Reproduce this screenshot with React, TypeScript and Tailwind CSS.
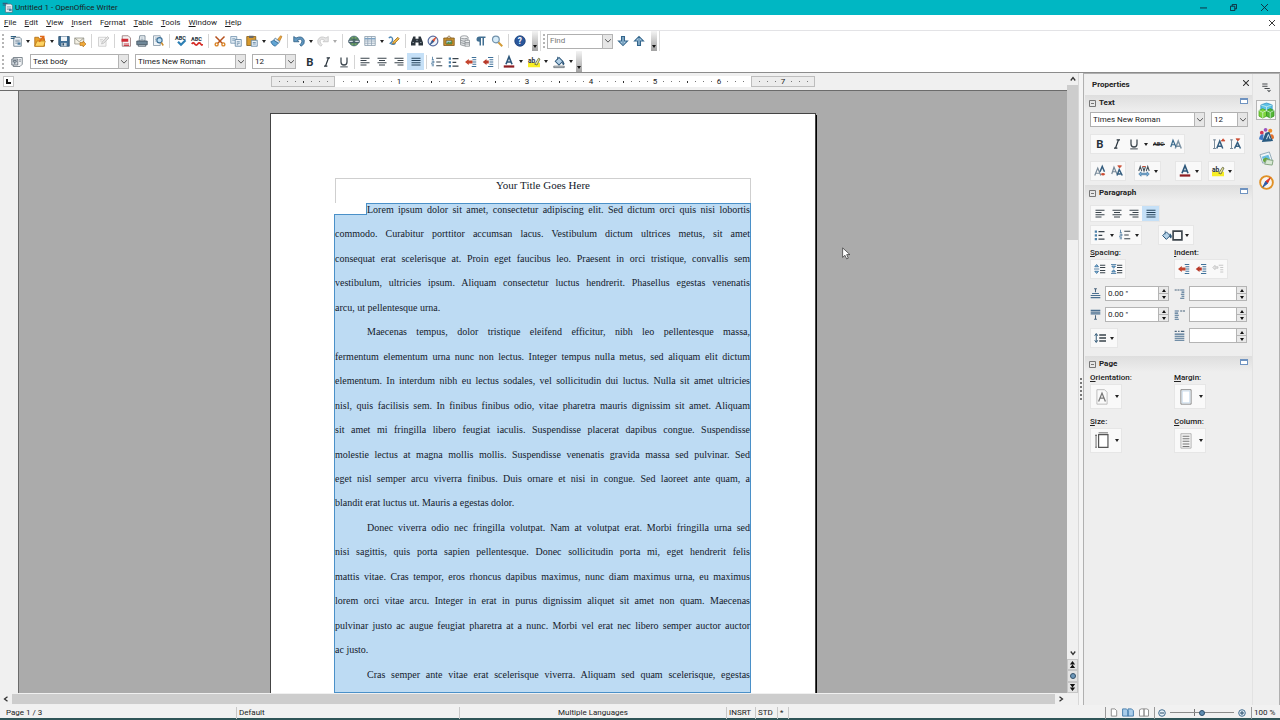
import { useState, type ReactNode } from "react";

const icons: Record<string, ReactNode> = {
  doc: (
    <>
      <path d="M5 3h8l2 2v10H5z" fill="#eef3f7" stroke="#54697a" />
      <path d="M1 2h7M1 4.500h5" stroke="#2f5f80" strokeWidth="1.500" />
      <path d="M7 7h6M7 9h6M7 11h3" stroke="#6d8396" />
      <rect x="10" y="10" width="4" height="3" fill="#4d7fa3" />
    </>
  ),
  open: (
    <>
      <path d="M1 3h5l1 2h7v10H1z" fill="#e9a02b" stroke="#a8650e" />
      <path d="M1 15 4 8h11l-2 7z" fill="#ffd463" stroke="#b5781a" />
      <path d="m7 9 5-6M8 2h5v5" stroke="#e06a1b" strokeWidth="2" fill="none" />
    </>
  ),
  save: (
    <>
      <path d="M1 2h14v13H3l-2-2z" fill="#3f6f96" stroke="#274a68" />
      <path d="M4 2h8v6H4z" fill="#f2f6f9" />
      <path d="M4.500 10.500h7V15h-7z" fill="#c9d4dd" />
      <path d="M6 11h2v3H6z" fill="#274a68" />
    </>
  ),
  mail: (
    <>
      <path d="M1 4h12v8H1z" fill="#f4f1e4" stroke="#8b8b80" />
      <path d="m1 4 6 5 6-5" stroke="#8b8b80" fill="none" />
      <path d="M8 10h4V8l4 4-4 4v-2H8z" fill="#f0a93a" stroke="#b06f12" strokeWidth=".8" />
    </>
  ),
  edit: (
    <>
      <path d="M2 3h10v12H2z" fill="#f5f5f5" stroke="#c6c6c6" />
      <path d="m6 12 1-3 7-7 2 2-7 7z" fill="#e1e1e1" stroke="#bdbdbd" />
      <path d="M4 6h4M4 8h3" stroke="#cfcfcf" />
    </>
  ),
  pdf: (
    <>
      <path d="M3 1h8l3 3v11H3z" fill="#f7f2f2" stroke="#8a6a6a" />
      <path d="M2 5h9v4H2z" fill="#cf2b35" />
      <path d="M5 12h7M5 14h7" stroke="#c8414a" fill="none" strokeWidth="1.400" />
    </>
  ),
  print: (
    <>
      <path d="M5 1h7v7H4z" fill="#f0f4f7" stroke="#5d7180" />
      <path d="M1 8h14v5H1z" fill="#6f8798" stroke="#3d4f5c" />
      <path d="M3 13h10v2H3z" fill="#dbe3e9" stroke="#3d4f5c" />
      <path d="M6 4h4M6 6h4" stroke="#92a4b1" />
    </>
  ),
  preview: (
    <>
      <path d="M2 1h9v13H2z" fill="#eff4f8" stroke="#7b8e9d" />
      <path d="M4 4h3M4 6h2M4 8h2" stroke="#8ea1b0" />
      <circle cx="10" cy="7" r="3.500" fill="#bfe0f5" stroke="#3c6f96" strokeWidth="1.500" />
      <path d="m12.500 10 2.500 4" stroke="#c98b2e" strokeWidth="2" />
    </>
  ),
  spell: (
    <>
      <text x="0" y="6.500" fontSize="7.500" fontWeight="700" fill="#26323c">ABC</text>
      <path d="m4 9 4 4 6-6" stroke="#2c7fb4" strokeWidth="3" fill="none" />
    </>
  ),
  autospell: (
    <>
      <text x="0" y="7.500" fontSize="7.500" fontWeight="700" fill="#26323c">ABC</text>
      <path d="M1 12q2-3 4 0t4 0 4 0 2 0" stroke="#d52a25" strokeWidth="2.200" fill="none" />
    </>
  ),
  cut: (
    <>
      <path d="M2 2 11 11M14 2 5 11" stroke="#b5501d" strokeWidth="2" />
      <circle cx="3.500" cy="12.500" r="2" fill="none" stroke="#d98325" strokeWidth="1.800" />
      <circle cx="12.500" cy="12.500" r="2" fill="none" stroke="#d98325" strokeWidth="1.800" />
    </>
  ),
  copy: (
    <>
      <path d="M1 2h8v9H1z" fill="#dfeaf3" stroke="#6d8fac" />
      <path d="M3 5h4M3 7h4" stroke="#6d8fac" />
      <path d="M7 6h8v9H7z" fill="#edf4fa" stroke="#54799a" />
      <path d="M9 9h4M9 11h4M9 13h2" stroke="#54799a" />
    </>
  ),
  paste: (
    <>
      <path d="M1 2h12v12H1z" fill="#d6992e" stroke="#7e5512" />
      <path d="M4 1h6v3H4z" fill="#67696c" />
      <path d="M7 7h8v8H7z" fill="#e8f1f8" stroke="#54799a" />
      <path d="M9 10h4M9 12h4" stroke="#54799a" />
    </>
  ),
  brush: (
    <>
      <path d="m10 6 4-5 2 1-3 6z" fill="#e9a33a" stroke="#a56a17" strokeWidth=".7" />
      <path d="M7 4 13 9 11 11 5 7z" fill="#dfeaf2" stroke="#416c8e" />
      <path d="M5 7 1 9q2 5 6 6l4-4z" fill="#62a5d4" stroke="#2b6594" />
    </>
  ),
  undo: (
    <path d="M1 2v7h7L6 7q5-3 6 1 0 3-3 5l2 2q5-3 4-8Q12 0 4 4z" fill="#6199c2" stroke="#24557d" />
  ),
  redo: (
    <path d="M15 2v7H8l2-2Q5 4 4 8q0 3 3 5l-2 2Q0 12 1 7q3-7 11-3z" fill="#e5e5e5" stroke="#c2c2c2" />
  ),
  globe: (
    <>
      <circle cx="8" cy="8" r="6.500" fill="#77a862" stroke="#386073" />
      <path d="M8 2v12M3 5q5 2 10 0M3 11q5-2 10 0" stroke="#33566b" fill="none" />
      <path d="M1 7h6v3H1zM9 7h6v3H9z" fill="#d6dfe6" stroke="#2f4655" />
    </>
  ),
  table: (
    <>
      <path d="M1 2h14v12H1z" fill="#edf2f6" stroke="#8497a7" />
      <path d="M1 5h14" stroke="#7ba3c5" strokeWidth="2" />
      <path d="M1 8h14M1 11h14M5 2v12M10 2v12" stroke="#8fa2b3" />
    </>
  ),
  draw: (
    <>
      <path d="M1 4q4-3 5 1t-3 6q4 3 7 0" stroke="#4a85b3" strokeWidth="1.800" fill="none" />
      <path d="m6 12 1-3 6-6 2 2-6 6z" fill="#efb543" stroke="#97681b" />
    </>
  ),
  binoculars: (
    <>
      <path d="M3 2h3v3h4V2h3l3 8v4h-6v-4H6v4H0v-4z" fill="#2b343c" />
      <path d="M2 10h2M12 10h2M7 7h2" stroke="#a9b7c1" />
    </>
  ),
  compass: (
    <>
      <circle cx="8" cy="8" r="6.500" fill="#eef3fa" stroke="#5c6fa0" strokeWidth="1.600" />
      <path d="m12 3-3 6-2-2z" fill="#d94a2b" stroke="#d94a2b" />
      <path d="m4 13 3-6 2 2z" fill="#35598e" stroke="#35598e" />
    </>
  ),
  gallery: (
    <>
      <path d="M1 4h14v10H1z" fill="#c89432" stroke="#785113" />
      <path d="M4 7h8v5H4z" fill="#9ecbd6" stroke="#785113" />
      <path d="m4 12 3-3 2 1 3-2v4z" fill="#578c45" />
      <path d="m5 4 3-3 3 3" stroke="#785113" fill="none" />
    </>
  ),
  database: (
    <>
      <path d="M2 3v10q5 3 10 0V3z" fill="#dcdfe1" stroke="#84898d" />
      <ellipse cx="7" cy="3" rx="5" ry="2" fill="#f3f4f5" stroke="#84898d" />
      <path d="M2 7q5 3 10 0M2 10q5 3 10 0" stroke="#84898d" fill="none" />
      <path d="M8 7h6v8H8z" fill="#eef0f1" stroke="#84898d" />
      <path d="M8 10h6M8 12h6" stroke="#84898d" />
    </>
  ),
  pilcrow: <path d="M14 2H6q-4 0-4 4 0 3 4 3v5h2V4h2v10h2V4h2z" fill="#416f92" />,
  zoom: (
    <>
      <circle cx="6.500" cy="6" r="4.500" fill="#d5ebf8" stroke="#7191ab" strokeWidth="1.600" />
      <path d="m10 10 5 5" stroke="#d39b36" strokeWidth="2.600" />
    </>
  ),
  help: (
    <>
      <circle cx="8" cy="8" r="7" fill="#2a579b" stroke="#173a73" />
      <text x="5" y="12" fontSize="11" fontWeight="700" fill="#fff">?</text>
    </>
  ),
  down: (
    <>
      <path d="M6 2h4v6h4l-6 6-6-6h4z" fill="#a9cbe3" stroke="#33658c" strokeWidth="1.400" />
      <path d="M8 2v10" stroke="#33658c" />
    </>
  ),
  up: (
    <>
      <path d="M6 14h4V8h4L8 2 2 8h4z" fill="#a9cbe3" stroke="#33658c" strokeWidth="1.400" />
      <path d="M8 14V4" stroke="#33658c" />
    </>
  ),
  styles: (
    <>
      <path d="M3 2h12v9l-3 3H3z" fill="#f0f2f4" stroke="#5b6770" />
      <path d="M1 4h8v8H1z" fill="#d4dae0" stroke="#5b6770" />
      <path d="M3 6h4v2H3zM5 8v3M11 5h2M11 7h2" stroke="#4d5c68" fill="none" />
    </>
  ),
  bold: <text x="3" y="13.500" fontSize="15" fontWeight="700" fill="#27323b">B</text>,
  italic: <path d="M7.500 2.500H12M4 13.500h4.500M10 2.500l-4 11" stroke="#27323b" strokeWidth="1.700" />,
  underline: (
    <>
      <path d="M4 2v6q0 4 4 4t4-4V2" fill="none" stroke="#3e4850" strokeWidth="1.700" />
      <path d="M3 14.500h10" stroke="#3e4850" strokeWidth="1.300" />
    </>
  ),
  strike: (
    <>
      <text x="0" y="11" fontSize="7.500" fontWeight="700" fill="#444">ABC</text>
      <path d="M0 8.500h16" stroke="#222" strokeWidth="1.500" />
    </>
  ),
  shadow: (
    <>
      <path d="m7 14 4-10 4 10M8 11h6" fill="none" stroke="#7d93a4" strokeWidth="2" />
      <path d="M1 12 4 3l4 9M2 9h5" fill="none" stroke="#39698c" strokeWidth="1.600" />
    </>
  ),
  left: <path d="M2 3h12M2 6h8M2 9h12M2 12h8" stroke="#39434b" strokeWidth="1.400" />,
  center: <path d="M2 3h12M4 6h8M2 9h12M4 12h8" stroke="#39434b" strokeWidth="1.400" />,
  right: <path d="M2 3h12M6 6h8M2 9h12M6 12h8" stroke="#39434b" strokeWidth="1.400" />,
  justify: <path d="M2 3h12M2 6h12M2 9h12M2 12h12" stroke="#24435c" strokeWidth="1.600" />,
  numbers: (
    <>
      <path d="M2 1v4M1 5h3M1 7h3v2H1v2h3M1 13h3" stroke="#3c6e96" fill="none" />
      <path d="M7 3h8M7 8h6M7 13h8" stroke="#39434b" strokeWidth="1.500" />
    </>
  ),
  bullets: (
    <>
      <path d="M1 2h3v3H1zM1 7h3v3H1zM1 12h3v3H1z" fill="#4b80a9" />
      <path d="M6 3.500h8M6 8.500h5M6 13.500h8" stroke="#39434b" strokeWidth="1.500" />
    </>
  ),
  indentOut: (
    <>
      <path d="M9 2h6M10 5h5M10 8h5M10 11h5M9 14h6" stroke="#3a6d97" strokeWidth="1.300" />
      <path d="m0 8 5-4v2h5v4H5v2z" fill="#c4452e" />
    </>
  ),
  indentIn: (
    <>
      <path d="M8 2h7M10 5h5M10 8h5M10 11h5M8 14h7" stroke="#3a6d97" strokeWidth="1.300" />
      <path d="m1 8 5-4v2h3v4H6v2z" fill="#b83a2a" />
    </>
  ),
  hanging: (
    <>
      <path d="M9 3h6M11 6h4M11 9h4M11 12h4" stroke="#c2c2c2" strokeWidth="1.200" />
      <path d="m1 6 3-3v2h4v2H4v2z" fill="#e2e2e2" stroke="#c2c2c2" />
    </>
  ),
  fontColor: (
    <>
      <path d="M4 11 8 1l4 10M5.500 8h5" fill="none" stroke="#2c567a" strokeWidth="2.200" />
      <path d="M1 12.500h14v3H1z" fill="#8e1d22" />
    </>
  ),
  highlight: (
    <>
      <path d="M0 9h16v6H0z" fill="#f8ee24" />
      <text x="0" y="9" fontSize="9" fontWeight="700" fill="#2b3338">ab</text>
      <path d="m9 11 5-8 2 1-4 8z" fill="#ece9a0" stroke="#585c32" />
    </>
  ),
  fill: (
    <>
      <path d="m3 7 5-5 5 5-5 5z" fill="#b5d2e8" stroke="#2c5679" strokeWidth="1.400" />
      <path d="M6 5V1M13 7q3 3 1 5-2-1-1-5" stroke="#2c5679" fill="#2c5679" />
      <path d="M1 13.500h14v2H1z" fill="#dbe1e5" stroke="#3a444b" strokeWidth=".8" />
    </>
  ),
  bucket: (
    <>
      <path d="m1 9 6-6 6 6-6 6z" fill="#b5d2e8" stroke="#2c5679" strokeWidth="1.600" />
      <path d="M5 7V1M13 6q4 4 1 7-3-2-1-7" stroke="#2c5679" fill="#2c5679" />
    </>
  ),
  grow: (
    <>
      <path d="M2 2v12M0 2.500h4M0 14h4" stroke="#788a99" strokeWidth="1.300" fill="none" />
      <path d="m5 14 4-10 4 10M6 11h6" fill="none" stroke="#365f80" strokeWidth="2" />
      <path d="m11 4 2.500-3L16 4z" fill="#c94b32" stroke="#c94b32" />
    </>
  ),
  shrink: (
    <>
      <path d="M2 2v12M0 2.500h4M0 14h4" stroke="#788a99" strokeWidth="1.300" fill="none" />
      <path d="m6 14 4-8 4 8M7 11h6" fill="none" stroke="#365f80" strokeWidth="2" />
      <path d="m8 1 2.500 3L13 1z" fill="#c94b32" stroke="#c94b32" />
    </>
  ),
  superscript: (
    <>
      <path d="m1 14 4-10 4 10M2 11h6" fill="none" stroke="#788a99" strokeWidth="1.600" />
      <path d="m8 9 3-7 3 7" fill="none" stroke="#365f80" strokeWidth="2" />
      <path d="M9 12q3-3 6 0-3 4-6 0" fill="#c94b32" />
    </>
  ),
  subscript: (
    <>
      <path d="m1 12 3-9 4 9M2 9h5" fill="none" stroke="#788a99" strokeWidth="1.600" />
      <path d="m8 14 3-8 4 8M9 12h4" fill="none" stroke="#365f80" strokeWidth="2" />
      <path d="m9 1 2.500 3L14 1z" fill="#c94b32" stroke="#c94b32" />
    </>
  ),
  spacing: (
    <>
      <path d="m1 8 2-6 2 6M6 2l2 6 2-6M11 8l2-6 2 6" fill="none" stroke="#47535c" strokeWidth="1.400" />
      <path d="m1 12 3-3v2h8V9l3 3-3 3v-2H4v2z" fill="#7db2d8" stroke="#2e6796" strokeWidth=".8" />
      <path d="M6 2h4" stroke="#c94b32" strokeWidth="1.400" />
    </>
  ),
  parMore: (
    <>
      <path d="M8 3h7M8 6h7M8 10h7M8 13h7" stroke="#39434b" strokeWidth="1.400" />
      <path d="m1 5 2.500-3L6 5zM1 11l2.500 3L6 11z" fill="#8bbadb" stroke="#2e6796" />
      <path d="M0 8h7" stroke="#2e6796" />
    </>
  ),
  parLess: (
    <>
      <path d="M8 3h7M8 6h7M8 10h7M8 13h7" stroke="#39434b" strokeWidth="1.400" />
      <path d="m1 4 2.500 3L6 4zM1 12l2.500-3L6 12z" fill="#8bbadb" stroke="#2e6796" />
      <path d="M0 2h7M0 14h7" stroke="#2e6796" />
    </>
  ),
  above: (
    <>
      <path d="M8 1v5M6 1h4" stroke="#47627a" strokeWidth="1.500" />
      <path d="M3 8h10M1 11h14M1 14h14" stroke="#4a6f90" strokeWidth="1.600" />
    </>
  ),
  below: (
    <>
      <path d="M1 2h14M1 4.500h14M1 7h14" stroke="#4a6f90" strokeWidth="2" />
      <path d="M8 9v6M6 15h4" stroke="#47627a" strokeWidth="1.500" />
    </>
  ),
  before: (
    <>
      <path d="M1 3h3M5 3h3" stroke="#47627a" strokeWidth="1.500" />
      <path d="M9 3h6M11 6h4M10 9h5M11 12h4M9 15h6" stroke="#4a6f90" strokeWidth="1.500" />
    </>
  ),
  after: (
    <>
      <path d="M9 3h3M13 3h3" stroke="#47627a" strokeWidth="1.500" />
      <path d="M1 3h6M1 6h5M1 9h6M1 12h5M1 15h6" stroke="#4a6f90" strokeWidth="1.500" />
    </>
  ),
  firstLine: (
    <>
      <path d="M1 2h3M6 2h2M10 2h5" stroke="#47627a" strokeWidth="1.500" />
      <path d="M1 6h14M1 9h14M1 12h14M1 15h14" stroke="#4a6f90" strokeWidth="1.500" />
    </>
  ),
  lineSpacing: (
    <>
      <path d="M3 3v10M1 5l2-3 2 3M1 11l2 3 2-3" fill="none" stroke="#2e5675" strokeWidth="1.300" />
      <path d="M7 4h9M7 8h9M7 12h9" stroke="#39434b" strokeWidth="1.700" />
    </>
  ),
  cubes: (
    <>
      <path d="m8 0 6 2v6l-6 2-6-2V2z" fill="#5dc2e8" stroke="#2b8dc0" strokeWidth=".8" />
      <path d="m4 6 4 2v6l-4 2-4-2V8z" fill="#7fd53c" stroke="#48a31d" strokeWidth=".8" />
      <path d="m12 6 4 2v6l-4 2-4-2V8z" fill="#54b536" stroke="#338f22" strokeWidth=".8" />
      <path d="m2 2 6 2 6-2M8 4v5M0 8l4 2 4-2 4 2 4-2M4 10v6M12 10v6" stroke="#e4f8ec" fill="none" strokeWidth=".7" />
    </>
  ),
  people: (
    <>
      <circle cx="3" cy="6" r="2" fill="#d53852" />
      <circle cx="7" cy="3" r="2" fill="#9c54bd" />
      <circle cx="12" cy="4" r="2.200" fill="#ef8e28" />
      <path d="M3 16 7 6l4-1 4 10z" fill="#285a80" />
      <path d="M0 13q1-6 5-5l-1 6z" fill="#3f77c4" />
      <path d="M12 8q4-1 4 4l-2 1z" fill="#e2702c" />
      <path d="m8 13 2-5 2 5" stroke="#dcecf7" fill="none" />
    </>
  ),
  photos: (
    <>
      <path d="m1 4 10-3 3 9-10 3z" fill="#eef5f8" stroke="#91a9b6" />
      <path d="m3 6 7-2 2 5-7 2z" fill="#69bce0" />
      <path d="m4 9 3-2 5 2-1 2-6 1z" fill="#69a83c" />
      <path d="m8 9 7 1-1 5-8-1z" fill="#d8e9d4" stroke="#81a27d" />
    </>
  ),
  navigator: (
    <>
      <circle cx="8" cy="8" r="6.800" fill="#f8f5f0" stroke="#e09127" strokeWidth="2" />
      <path d="m12 3-3 6-2-2z" fill="#d9352b" stroke="#d9352b" />
      <path d="m4 13 3-6 2 2z" fill="#2d5ca8" stroke="#2d5ca8" />
    </>
  ),
  deckMenu: (
    <path d="M3 4h7M3 7h7M6 10h7M10 12l2 2 2-2" stroke="#45494c" strokeWidth="1.400" fill="none" />
  ),
};

function Icon({ name, className = "size-3" }: { name: string; className?: string }) {
  return (
    <svg viewBox="0 0 16 16" className={`${className} shrink-0 overflow-visible`} fill="none" aria-hidden="true">
      {icons[name]}
    </svg>
  );
}

function Tool({ name, label, active = false }: { name: string; label?: string; active?: boolean }) {
  return (
    <button
      aria-label={label ?? name}
      className={`flex h-full w-full items-center justify-center ${active ? "bg-[#c5e0f7]" : ""}`}
    >
      <Icon name={name} />
    </button>
  );
}

function Arrow({ dim = false }: { dim?: boolean }) {
  return (
    <button aria-label="More options" className="flex h-full w-2 shrink-0 items-center justify-center">
      <svg viewBox="0 0 4 3" className="h-[3px] w-1">
        <path d="M0 0h4L2 3z" fill={dim ? "#aaa" : "#222"} />
      </svg>
    </button>
  );
}

function Grip() {
  return <span className="mx-[2px] h-[14px] w-0 shrink-0 border-l-2 border-dotted border-[#b5b5b5]" />;
}

function Handle() {
  return (
    <button
      aria-label="Toolbar options"
      className="flex h-full w-[6px] shrink-0 items-end justify-center bg-linear-to-b from-[#f4f4f4] to-[#a2a2a2] pb-[3px]"
    >
      <svg viewBox="0 0 4 3" className="h-[3px] w-1">
        <path d="M0 0h4L2 3z" fill="#111" />
      </svg>
    </button>
  );
}

function Chevron() {
  return (
    <span className="pointer-events-none absolute inset-y-0 right-0 flex w-[11px] items-center justify-center border border-[#b4b4b4] bg-[#e6e6e6]">
      <svg viewBox="0 0 8 5" className="h-1 w-[6px]">
        <path d="m0 0 4 4 4-4" fill="none" stroke="#444" strokeWidth="1.200" />
      </svg>
    </span>
  );
}

function Combo({ label, value, className }: { label: string; value: string; className: string }) {
  return (
    <span className={`relative flex h-[15px] shrink-0 ${className}`}>
      <select
        aria-label={label}
        className="w-full appearance-none border border-[#b0b0b0] bg-white pl-[2px] text-[#222]"
      >
        <option>{value}</option>
      </select>
      <Chevron />
    </span>
  );
}

// "|" is a separator, "v" a drop-down arrow, "x" a disabled one
const standardBar =
  "doc v open v save mail | edit | pdf print preview | spell autospell | cut copy paste v brush | undo v redo x | globe table v draw | binoculars compass gallery database pilcrow zoom | help".split(" ");
const formatBar =
  "bold italic underline | left center right justify | numbers bullets indentOut indentIn | fontColor v highlight v fill v".split(" ");

function BarItems({ items, cell, gap }: { items: string[]; cell: string; gap: string }) {
  return items.map((item, i) => {
    if (item === "|")
      return (
        <span key={i} className={`flex shrink-0 justify-center ${gap}`}>
          <span className="h-[14px] w-px bg-[#d4d4d4]" />
        </span>
      );
    if (item === "v" || item === "x") return <Arrow key={i} dim={item === "x"} />;
    return (
      <span key={i} className={`h-[17px] shrink-0 ${cell}`}>
        <Tool name={item} active={item === "justify"} />
      </span>
    );
  });
}

const paragraphs = [
  [
    "Lorem ipsum dolor sit amet, consectetur adipiscing elit. Sed dictum orci quis nisi lobortis",
    "commodo. Curabitur porttitor accumsan lacus. Vestibulum dictum ultrices metus, sit amet",
    "consequat erat scelerisque at. Proin eget faucibus leo. Praesent in orci tristique, convallis sem",
    "vestibulum, ultricies ipsum. Aliquam consectetur luctus hendrerit. Phasellus egestas venenatis",
    "arcu, ut pellentesque urna.",
  ],
  [
    "Maecenas tempus, dolor tristique eleifend efficitur, nibh leo pellentesque massa,",
    "fermentum elementum urna nunc non lectus. Integer tempus nulla metus, sed aliquam elit dictum",
    "elementum. In interdum nibh eu lectus sodales, vel sollicitudin dui luctus. Nulla sit amet ultricies",
    "nisl, quis facilisis sem. In finibus finibus odio, vitae pharetra mauris dignissim sit amet. Aliquam",
    "sit amet mi fringilla libero feugiat iaculis. Suspendisse placerat dapibus congue. Suspendisse",
    "molestie lectus at magna mollis mollis. Suspendisse venenatis gravida massa sed pulvinar. Sed",
    "eget nisl semper arcu viverra finibus. Duis ornare et nisi in congue. Sed laoreet ante quam, a",
    "blandit erat luctus ut. Mauris a egestas dolor.",
  ],
  [
    "Donec viverra odio nec fringilla volutpat. Nam at volutpat erat. Morbi fringilla urna sed",
    "nisi sagittis, quis porta sapien pellentesque. Donec sollicitudin porta mi, eget hendrerit felis",
    "mattis vitae. Cras tempor, eros rhoncus dapibus maximus, nunc diam maximus urna, eu maximus",
    "lorem orci vitae arcu. Integer in erat in purus dignissim aliquet sit amet non quam. Maecenas",
    "pulvinar justo ac augue feugiat pharetra at a nunc. Morbi vel erat nec libero semper auctor auctor",
    "ac justo.",
  ],
  ["Cras semper ante vitae erat scelerisque viverra. Aliquam sed quam scelerisque, egestas"],
];

function Ticks({ from, to }: { from: number; to: number }) {
  return Array.from({ length: to - from + 1 }, (_, i) => from + i).map((k) => (
    <span key={k} className="flex w-2 shrink-0 items-center justify-center text-[#222]">
      {k % 8 === 0 ? k / 8 : <span className={k % 4 === 0 ? "h-[2px] w-px bg-[#333]" : "size-px bg-[#777]"} />}
    </span>
  ));
}

function Ruler() {
  return (
    <div className="flex h-[18px] shrink-0 items-center border-b border-[#6b6b6b] bg-[#f0f0f0] pl-[3px]">
      <button aria-label="Tab stop" className="flex size-[11px] shrink-0 items-center justify-center border border-[#c4c4c4] bg-white">
        <svg viewBox="0 0 5 5" className="size-[5px]">
          <path d="M1 0v4h4" stroke="#111" strokeWidth="2" fill="none" />
        </svg>
      </button>
      <div className="ml-[5px] flex h-[11px] flex-1 justify-center overflow-hidden">
        <div className="flex w-16 shrink-0 border border-[#bdbdbd] bg-[#ececec] pl-[3px]">
          <Ticks from={-7} to={-1} />
        </div>
        <div className="flex w-[416px] shrink-0 bg-white pl-1">
          <Ticks from={1} to={51} />
        </div>
        <div className="flex w-16 shrink-0 border border-[#bdbdbd] bg-[#ececec] pl-[3px]">
          <Ticks from={53} to={59} />
        </div>
      </div>
    </div>
  );
}

function Document() {
  return (
    <div className="flex min-h-0 flex-1 justify-center overflow-hidden border-l border-[#6b6b6b] bg-[#ababab] pt-[22px]">
      <div className="h-[704px] w-[546px] shrink-0 border border-[#444] bg-white px-16 pt-16 font-['Liberation_Serif',serif] text-[10px] leading-3 text-[#14202b] shadow-[1px_2px_0_#000]">
        <h1 className="h-[25px] border-x border-t border-[#cfcfcf] text-center text-[11px]">Your Title Goes Here</h1>
        <div className="-ml-px flex h-[490px] flex-col border-r border-b border-l border-[#4a90c8] bg-[#bddbf3]">
          {paragraphs.map((lines, p) => (
            <p key={p} className="contents">
              {lines.map((line, i) => (
                <span key={i} className="flex flex-1">
                  {i === 0 && (
                    <span
                      className={
                        p === 0
                          ? "-ml-px h-3 w-[33px] shrink-0 border-r border-b border-[#4a90c8] bg-white"
                          : "w-8 shrink-0"
                      }
                    />
                  )}
                  <span
                    className={`flex-1 border-t whitespace-nowrap ${i === lines.length - 1 && lines.length > 1 ? "" : "text-justify [text-align-last:justify]"} ${p === 0 && i === 0 ? "border-[#4a90c8]" : "border-transparent"}`}
                  >
                    {line}
                  </span>
                </span>
              ))}
            </p>
          ))}
        </div>
      </div>
    </div>
  );
}

function ScrollArrow({ d, label, className }: { d: string; label: string; className: string }) {
  return (
    <button aria-label={label} className={`flex shrink-0 items-center justify-center ${className}`}>
      <svg viewBox="0 0 8 8" className="size-[6px]">
        <path d={d} fill="none" stroke="#333" strokeWidth="1.700" />
      </svg>
    </button>
  );
}

function VerticalScroll() {
  return (
    <div className="flex w-[11px] shrink-0 flex-col bg-[#f0f0f0]">
      <ScrollArrow d="m1 6 3-4 3 4" label="Scroll up" className="h-3" />
      <div className="h-[155px] shrink-0 bg-[#cdcdcd]" />
      <div className="flex-1" />
      <ScrollArrow d="m1 2 3 4 3-4" label="Scroll down" className="h-3" />
      <button aria-label="Previous page" className="flex h-[11px] items-center justify-center border border-[#c6c6c6] bg-[#e3e3e3]">
        <svg viewBox="0 0 8 8" className="size-[7px]">
          <path d="m1 4 3-4 3 4zM1 8l3-4 3 4z" fill="#111" />
        </svg>
      </button>
      <button aria-label="Navigation" className="flex h-3 items-center justify-center border border-[#c6c6c6] bg-[#e3e3e3]">
        <span className="size-[6px] rounded-full border border-[#34516a] bg-[#6d97b9]" />
      </button>
      <button aria-label="Next page" className="flex h-[11px] items-center justify-center border border-[#c6c6c6] bg-[#e3e3e3]">
        <svg viewBox="0 0 8 8" className="size-[7px]">
          <path d="m1 0 3 4 3-4zM1 4l3 4 3-4z" fill="#111" />
        </svg>
      </button>
    </div>
  );
}

function Group({ children, className = "h-5" }: { children: ReactNode; className?: string }) {
  return <div className={`flex items-center border border-[#e6e6e6] bg-[#f9f9f9] ${className}`}>{children}</div>;
}

function Cells({ names }: { names: string[] }) {
  return names.map((name, i) =>
    name === "v" ? (
      <Arrow key={i} />
    ) : (
      <span key={i} className="h-full w-[17px] shrink-0">
        <Tool name={name} active={name === "justify"} />
      </span>
    )
  );
}

function Section({ title, children }: { title: string; children: ReactNode }) {
  const [open, setOpen] = useState(true);
  return (
    <section>
      <h3 className="flex h-4 items-center bg-linear-to-b from-[#dedede] to-[#eeeeee] px-1">
        <button onClick={() => setOpen(!open)} className="flex flex-1 items-center gap-[3px] font-bold">
          <svg viewBox="0 0 7 7" className="size-[7px]">
            <path d="M.5.5h6v6h-6zM2 3.500h3" fill="none" stroke="#777" />
          </svg>
          {title}
        </button>
        <button aria-label={`${title} options`} className="mb-1 h-[6px] w-2 border border-t-2 border-[#6f93c0] bg-white" />
      </h3>
      {open && children}
    </section>
  );
}

function Spin({ icon, label, value = "" }: { icon: string; label: string; value?: string }) {
  return (
    <div className="flex items-center gap-1">
      <Icon name={icon} className="size-[11px]" />
      <div className="flex h-[15px] flex-1 border border-[#b4b4b4] bg-white">
        <input aria-label={label} defaultValue={value} className="w-0 flex-1 px-[2px] outline-none" />
        <div className="flex w-[10px] flex-col border-l border-[#b4b4b4] bg-[#e9e9e9]">
          <button aria-label={`Increase ${label}`} className="flex flex-1 items-center justify-center border-b border-[#b4b4b4]">
            <svg viewBox="0 0 4 3" className="h-[3px] w-1"><path d="M0 3h4L2 0z" fill="#111" /></svg>
          </button>
          <button aria-label={`Decrease ${label}`} className="flex flex-1 items-center justify-center">
            <svg viewBox="0 0 4 3" className="h-[3px] w-1"><path d="M0 0h4L2 3z" fill="#111" /></svg>
          </button>
        </div>
      </div>
    </div>
  );
}

function Label({ text }: { text: string }) {
  return (
    <span className="block leading-3 font-medium">
      <u>{text[0]}</u>
      {text.slice(1)}
    </span>
  );
}

function PageButton({ label, children }: { label: string; children: ReactNode }) {
  return (
    <div>
      <Label text={label} />
      <Group className="h-[25px] w-8">
        <button aria-label={label} className="flex h-full w-[22px] items-center justify-center">
          <svg viewBox="0 0 16 20" className="h-[17px] w-[14px]" fill="none">{children}</svg>
        </button>
        <Arrow />
      </Group>
    </div>
  );
}

function Sidebar() {
  return (
    <aside className="flex w-[197px] shrink-0 border-t border-r border-l border-[#b0b0b0] bg-[#eeeeee] pl-px text-[#222]">
      <div className="w-[168px] shrink-0 border-r border-[#e2e2e2]">
        <h2 className="flex h-[21px] items-center justify-between bg-[#f0f0f0] pr-[3px] pl-[7px] font-bold">
          Properties
          <button aria-label="Close sidebar" className="mb-1">
            <svg viewBox="0 0 8 8" className="size-[6px]"><path d="m0 0 8 8M8 0 0 8" stroke="#333" strokeWidth="1.400" /></svg>
          </button>
        </h2>
        <Section title="Text">
          <div className="flex flex-col gap-[7px] px-[5px] pt-px pb-1">
            <div className="flex gap-[6px]">
              <Combo label="Sidebar font name" value="Times New Roman" className="w-[115px]" />
              <Combo label="Sidebar font size" value="12" className="w-[37px]" />
            </div>
            <div className="flex justify-between pr-[2px]">
              <Group><Cells names={["bold", "italic", "underline", "v", "strike", "shadow"]} /></Group>
              <Group><Cells names={["grow", "shrink"]} /></Group>
            </div>
            <div className="flex pr-[12px]">
              <Group><Cells names={["superscript", "subscript"]} /></Group>
              <Group className="ml-2 h-5"><Cells names={["spacing", "v"]} /></Group>
              <Group className="ml-auto h-5"><Cells names={["fontColor", "v"]} /></Group>
              <Group className="ml-[6px] h-5"><Cells names={["highlight", "v"]} /></Group>
            </div>
          </div>
        </Section>
        <Section title="Paragraph">
          <div className="grid grid-cols-[84px_1fr] px-[5px] pt-1 pb-2">
            <Group className="h-[17px] w-[70px]"><Cells names={["left", "center", "right", "justify"]} /></Group>
            <span />
            <Group className="mt-[3px] h-5 w-[52px]"><Cells names={["bullets", "v", "numbers", "v"]} /></Group>
            <Group className="mt-[3px] -ml-4 h-5 w-[36px] justify-center">
              <Icon name="bucket" className="size-[10px]" />
              <svg viewBox="0 0 10 10" className="size-[11px]"><path d="M1 1h8v8H1z" fill="none" stroke="#3c444b" strokeWidth="1.500" /></svg>
              <Arrow />
            </Group>
            <span className="pt-[2px]"><Label text="Spacing:" /></span>
            <span className="pt-[2px]"><Label text="Indent:" /></span>
            <Group className="h-5 w-9"><Cells names={["parMore", "parLess"]} /></Group>
            <Group className="h-5 w-[54px]"><Cells names={["indentOut", "indentIn", "hanging"]} /></Group>
            <div className="mt-[7px] flex w-[79px] flex-col gap-[6px]">
              <Spin icon="above" label="spacing above" value={'0.00 "'} />
              <Spin icon="below" label="spacing below" value={'0.00 "'} />
              <Group className="h-5 w-7"><Cells names={["lineSpacing", "v"]} /></Group>
            </div>
            <div className="mt-[7px] flex flex-col gap-[6px]">
              <Spin icon="before" label="indent before text" />
              <Spin icon="after" label="indent after text" />
              <Spin icon="firstLine" label="first line indent" />
            </div>
          </div>
        </Section>
        <Section title="Page">
          <div className="grid grid-cols-[84px_1fr] gap-y-[7px] px-[5px]">
            <PageButton label="Orientation:">
              <path d="M2 2h9l3 3v14H2z" fill="#fafafa" stroke="#b5b5b5" />
              <path d="m4 16 4-10 4 10M5.500 12h5" stroke="#777" strokeWidth="1.500" />
            </PageButton>
            <PageButton label="Margin:">
              <path d="M2 2h12v17H2z" fill="#fff" stroke="#777" />
              <path d="M3.500 3.500h9v14h-9z" stroke="#c1d6e8" />
            </PageButton>
            <PageButton label="Size:">
              <path d="M4 3h11v15H4z" fill="#fff" stroke="#555" strokeWidth="1.400" />
              <path d="M1 3v15M0 4h2M0 18h2M4 1h11" stroke="#555" />
            </PageButton>
            <PageButton label="Column:">
              <path d="M2 2h12v17H2z" fill="#f4f4f4" stroke="#aaa" />
              <path d="M4 5h8M4 8h8M4 11h8M4 14h8M4 17h8" stroke="#777" strokeWidth="1.200" />
            </PageButton>
          </div>
        </Section>
      </div>
      <nav className="flex flex-1 flex-col items-center gap-1 pt-1" aria-label="Sidebar decks">
        <button aria-label="Sidebar settings" className="flex h-[18px] items-center"><Icon name="deckMenu" /></button>
        <button aria-label="Properties deck" className="flex size-5 items-center justify-center border border-[#b5b5b5] bg-[#f8f8f8]"><Icon name="cubes" className="size-[15px]" /></button>
        <button aria-label="Styles deck" className="flex size-5 items-center justify-center"><Icon name="people" className="size-[15px]" /></button>
        <button aria-label="Gallery deck" className="flex size-5 items-center justify-center"><Icon name="photos" className="size-[15px]" /></button>
        <button aria-label="Navigator deck" className="flex size-5 items-center justify-center"><Icon name="navigator" className="size-[15px]" /></button>
      </nav>
    </aside>
  );
}

function StatusBar() {
  return (
    <footer className="flex h-[15px] shrink-0 items-center border-b-2 border-[#2f5558] bg-[#f1f1f1] pt-[2px] text-[#222]">
      <span className="w-[236px] pl-[6px]">Page 1 / 3</span>
      <span className="w-[223px] border-l border-[#c8c8c8] pl-[2px]">Default</span>
      <span className="w-[267px] border-l border-[#c8c8c8] text-center">Multiple Languages</span>
      <span className="w-[29px] border-l border-[#c8c8c8] pl-[2px]">INSRT</span>
      <span className="w-[22px] border-l border-[#c8c8c8] pl-[2px]">STD</span>
      <span className="w-3 border-x border-[#c8c8c8] pl-[2px]">*</span>
      <span className="flex-1" />
      <div className="flex h-3 items-center gap-[3px] border-l border-[#999] px-1">
        <svg viewBox="0 0 8 10" className="h-[9px] w-[8px]"><path d="M1 1h4l2 2v6H1z" fill="#fff" stroke="#888" /></svg>
        <svg viewBox="0 0 14 10" className="h-[9px] w-[14px]"><path d="M1 1h4l2 2v6H1zM7 1h4l2 2v6H7z" fill="#a9cdea" stroke="#3f78a8" /></svg>
        <svg viewBox="0 0 12 10" className="h-[9px] w-[12px]"><path d="M1 2l2-1h3v8H1zM6 1h3l2 1v7H6z" fill="#fff" stroke="#888" /></svg>
      </div>
      <div className="flex h-3 items-center gap-1 border-l border-[#999] pr-[5px] pl-[3px]">
        <button aria-label="Zoom out">
          <svg viewBox="0 0 8 8" className="size-2"><circle cx="4" cy="4" r="3.300" fill="#e3eef6" stroke="#456e90" /><path d="M2 4h4" stroke="#274c6b" /></svg>
        </button>
        <div className="relative flex h-2 w-16 items-center">
          <span className="absolute left-6 h-[7px] w-px bg-[#777]" />
          <input
            type="range"
            aria-label="Zoom"
            defaultValue={50}
            className="relative h-px w-full appearance-none bg-[#8a8a8a] [&::-webkit-slider-thumb]:size-[6px] [&::-webkit-slider-thumb]:appearance-none [&::-webkit-slider-thumb]:rounded-full [&::-webkit-slider-thumb]:border [&::-webkit-slider-thumb]:border-[#2c4f6c] [&::-webkit-slider-thumb]:bg-[#5f8db1]"
          />
        </div>
        <button aria-label="Zoom in">
          <svg viewBox="0 0 8 8" className="size-2"><circle cx="4" cy="4" r="3.300" fill="#e3eef6" stroke="#456e90" /><path d="M2 4h4M4 2v4" stroke="#274c6b" /></svg>
        </button>
      </div>
      <span className="w-[29px] border-l border-[#999] pl-[2px]">100 %</span>
    </footer>
  );
}

export default function App() {
  const menus = ["File", "Edit", "View", "Insert", "Format", "Table", "Tools", "Window", "Help"];
  const underlined = [0, 0, 0, 0, 1, 0, 0, 0, 0];

  return (
    <div className="relative flex h-screen flex-col overflow-hidden bg-white font-[Roboto,sans-serif] text-[8px] leading-3 text-[#1c1c1c]">
      <header className="flex h-[15px] shrink-0 items-center bg-[#00b7c3] pl-[2px]">
        <Icon name="doc" className="size-[11px]" />
        <h1 className="ml-[2px] flex-1">Untitled 1 - OpenOffice Writer</h1>
        <button aria-label="Minimize" className="flex w-[30px] justify-center">
          <svg viewBox="0 0 8 8" className="size-[7px]"><path d="M0 4.500h8" stroke="#123" /></svg>
        </button>
        <button aria-label="Restore" className="flex w-[30px] justify-center">
          <svg viewBox="0 0 8 8" className="size-[7px]" fill="none"><path d="M.5 2.500h5v5h-5zM2.500 2.500v-2h5v5h-2" stroke="#123" /></svg>
        </button>
        <button aria-label="Close" className="flex w-[32px] justify-center">
          <svg viewBox="0 0 8 8" className="size-[7px]"><path d="m0 0 8 8M8 0 0 8" stroke="#123" /></svg>
        </button>
      </header>

      <nav className="flex h-4 shrink-0 items-center gap-2 border-b border-[#e3e3e6] pr-[5px] pl-1">
        {menus.map((menu, i) => (
          <button key={menu}>
            {menu.slice(0, underlined[i])}
            <u>{menu[underlined[i]]}</u>
            {menu.slice(underlined[i] + 1)}
          </button>
        ))}
        <button aria-label="Close document" className="ml-auto">
          <svg viewBox="0 0 8 8" className="size-[6px]"><path d="m0 0 8 8M8 0 0 8" stroke="#222" strokeWidth="1.200" /></svg>
        </button>
      </nav>

      <div className="flex h-5 shrink-0 items-center">
        <Grip />
        <span className="w-[2px]" />
        <BarItems items={standardBar} cell="w-4" gap="w-[7px]" />
        <span className="w-1" />
        <Handle />
        <span className="ml-[2px] h-full w-px bg-[#dcdcdc]" />
        <Grip />
        <span className="relative flex h-[15px] w-[66px]">
          <input aria-label="Find text" placeholder="Find" className="w-full border border-[#b0b0b0] bg-white pl-[2px] placeholder:text-[#777]" />
          <Chevron />
        </span>
        <span className="ml-[2px] h-4 w-4"><Tool name="down" label="Find next" /></span>
        <span className="h-4 w-4"><Tool name="up" label="Find previous" /></span>
        <span className="w-1" />
        <Handle />
        <span className="ml-[2px] h-full w-px bg-[#dcdcdc]" />
      </div>

      <div className="flex h-[22px] shrink-0 items-center border-b border-[#8c8c8c]">
        <Grip />
        <span className="mr-[5px] ml-[2px] h-4 w-[17px]"><Tool name="styles" /></span>
        <Combo label="Paragraph style" value="Text body" className="mr-[6px] w-[99px]" />
        <Combo label="Font name" value="Times New Roman" className="mr-[6px] w-[111px]" />
        <Combo label="Font size" value="12" className="mr-[5px] w-[44px]" />
        <BarItems items={formatBar} cell="w-[17px]" gap="w-1" />
        <span className="w-px" />
        <Handle />
      </div>

      <div className="flex min-h-0 flex-1">
        <div className="flex min-w-0 flex-1">
          <div className="flex min-w-0 flex-1 flex-col bg-[#f0f0f0]">
            <div className="flex min-h-0 flex-1">
              <div className="flex min-w-0 flex-1 flex-col">
                <Ruler />
                <div className="flex min-h-0 flex-1 pl-[18px]">
                  <Document />
                </div>
              </div>
              <VerticalScroll />
            </div>
            <div className="flex h-3 shrink-0 items-center">
              <ScrollArrow d="M6 1 2 4l4 3" label="Scroll left" className="w-3" />
              <div className="h-[10px] flex-1 bg-[#cdcdcd]" />
              <ScrollArrow d="m2 1 4 3-4 3" label="Scroll right" className="w-[23px] pr-[11px]" />
            </div>
          </div>
          <div className="flex w-[5px] shrink-0 items-center border-l border-[#d8d8d8] bg-[#f4f4f4]">
            <span className="ml-px h-[22px] border-l-2 border-dotted border-[#777]" />
          </div>
        </div>
        <Sidebar />
      </div>
      <StatusBar />

      {/* mouse pointer */}
      <svg viewBox="0 0 10 14" className="pointer-events-none absolute top-[247px] left-[842px] h-[13px] w-[9px]">
        <path d="M.7.8v10.500l2.600-2.300 1.900 4 1.800-.8-1.800-4h3.600z" fill="#fff" stroke="#333" strokeWidth=".8" />
      </svg>
    </div>
  );
}
